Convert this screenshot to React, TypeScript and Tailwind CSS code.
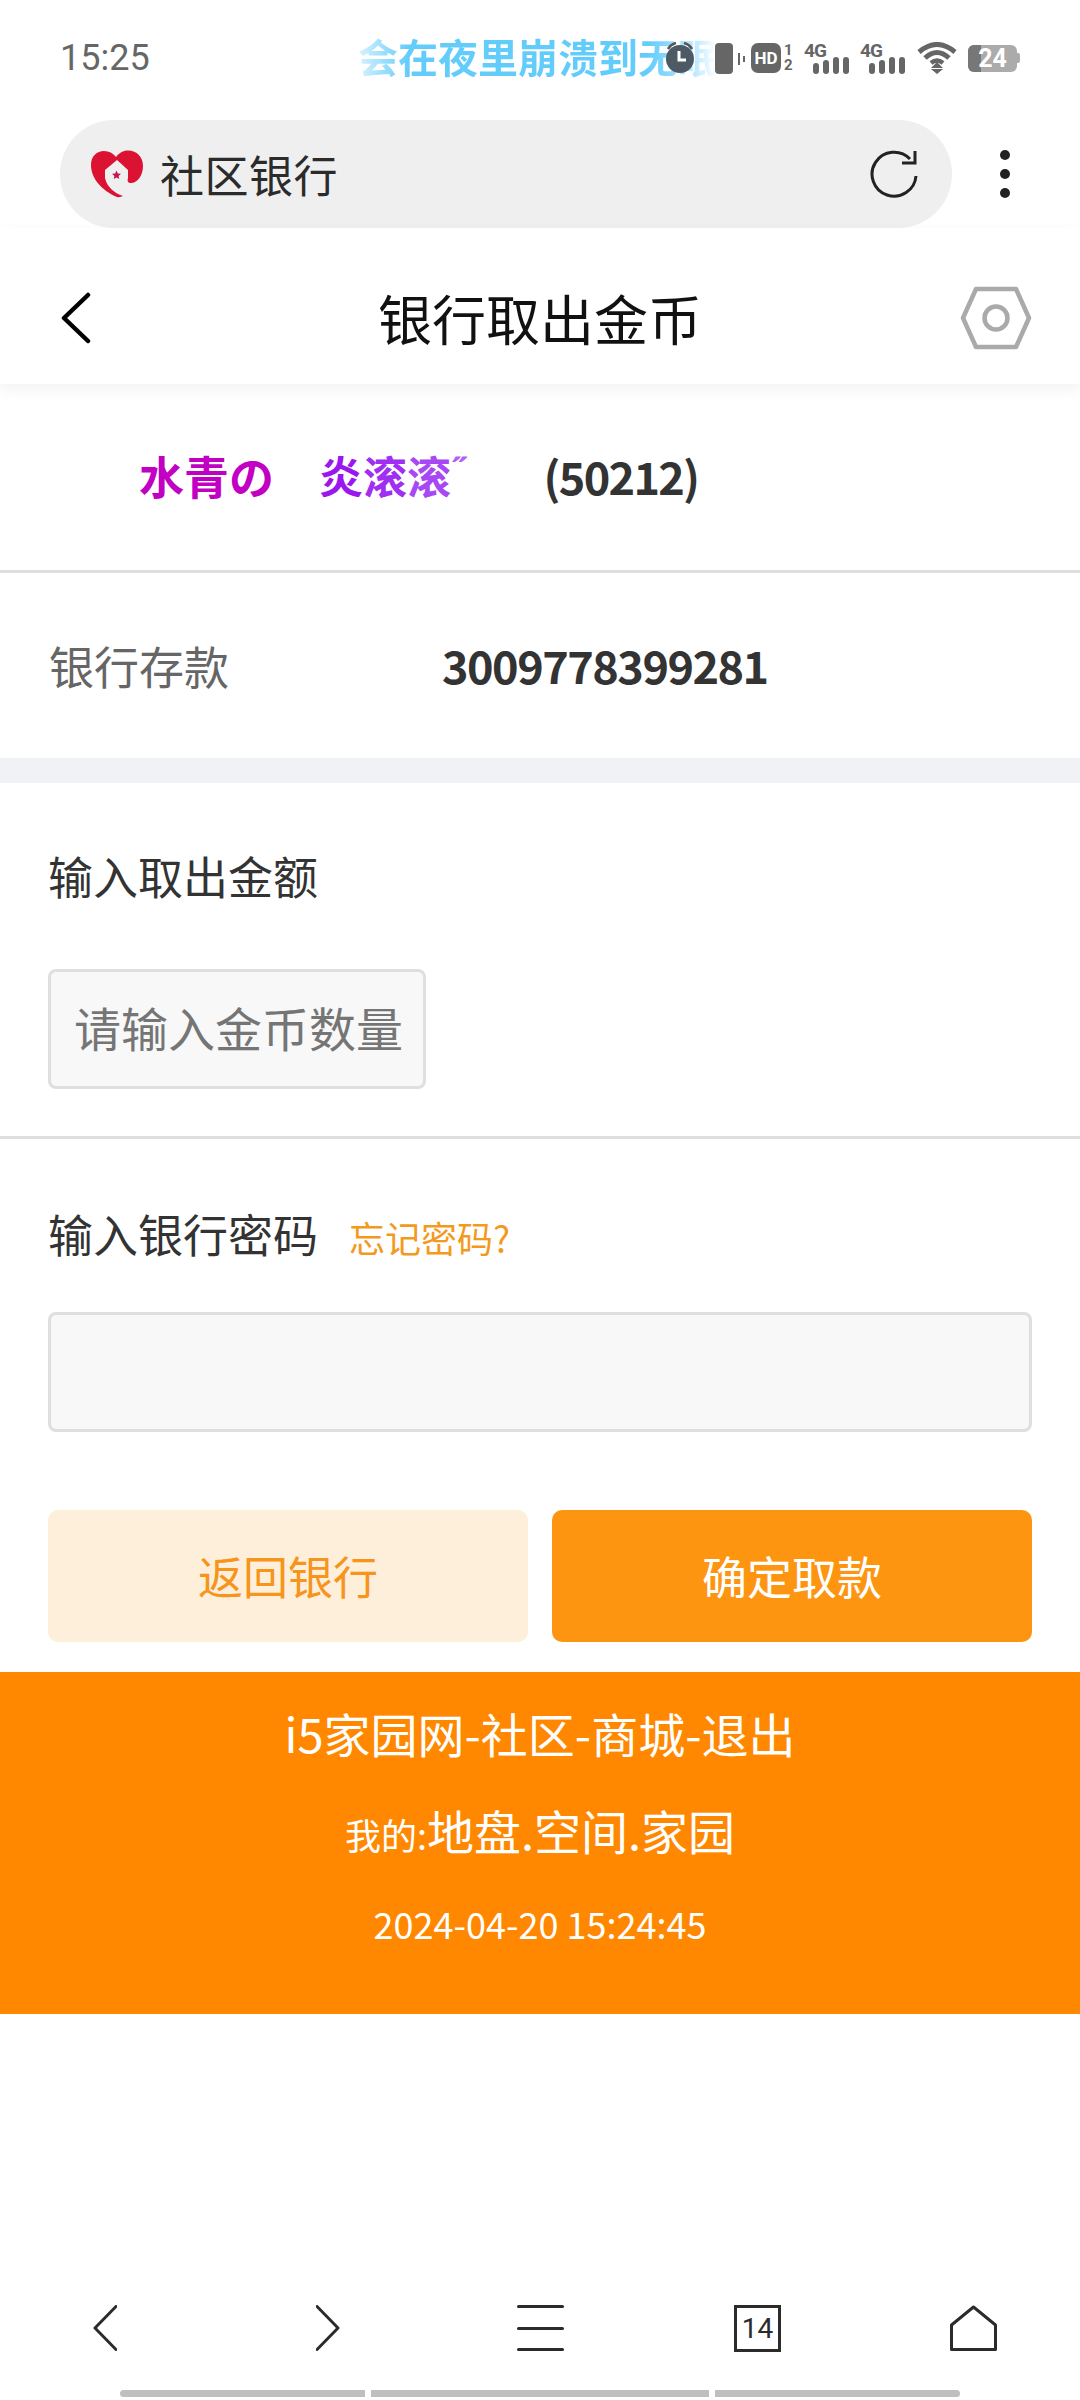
import React from 'react';

const cjk = "font-['Noto_Sans_CJK_SC','Noto_Sans',sans-serif]";

function SignalIcon() {
  return (
    <svg width="46" height="32" viewBox="0 0 46 32" className="text-[#666]">
      <text x="0" y="15" fontSize="19" fontWeight="700" fill="currentColor" fontFamily="Roboto, sans-serif" textLength="23">4G</text>
      <rect x="9" y="21" width="6" height="11" rx="3" fill="currentColor" />
      <rect x="19" y="18" width="6" height="14" rx="3" fill="currentColor" />
      <rect x="29" y="15" width="6" height="17" rx="3" fill="currentColor" />
      <rect x="39" y="15" width="6" height="17" rx="3" fill="currentColor" />
    </svg>
  );
}

function StatusIcons() {
  return (
    <div className="absolute right-[60px] top-[42px] flex items-center h-[32px]">
      {/* alarm */}
      <svg width="30" height="32" viewBox="0 0 30 32" className="mr-[20px]">
        <path d="M3 7 Q6 2 11 1 M27 7 Q24 2 19 1" fill="none" stroke="#555" strokeWidth="2.5" />
        <circle cx="15" cy="17" r="14" fill="#4d5a66" />
        <path d="M14 9v9h7" fill="none" stroke="#fff" strokeWidth="3" />
      </svg>
      {/* vibrate */}
      <svg width="30" height="32" viewBox="0 0 30 32" className="mr-[6px]">
        <rect x="0" y="1" width="18" height="31" rx="4" fill="#666" />
        <path d="M24 11v12M29 14v6" stroke="#666" strokeWidth="2" />
      </svg>
      {/* hd */}
      <div className="w-[30px] h-[30px] rounded-[7px] bg-[#666] flex items-center justify-center text-white text-[17px] font-bold font-['Roboto',sans-serif] leading-none">HD</div>
      <div className="flex flex-col w-[10px] ml-[3px] text-[#666] text-[15px] font-bold leading-[15px] font-['Roboto',sans-serif]">
        <span>1</span>
        <span>2</span>
      </div>
      <div className="ml-[10px]"><SignalIcon /></div>
      <div className="ml-[10px]"><SignalIcon /></div>
      {/* wifi */}
      <svg width="40" height="32" viewBox="0 0 40 32" className="ml-[11px]">
        <path d="M2 10 Q20 -5 38 10" fill="none" stroke="#666" strokeWidth="5" />
        <path d="M8 16 Q20 5 32 16" fill="none" stroke="#666" strokeWidth="5" />
        <path d="M14 21 Q20 16 26 21" fill="none" stroke="#666" strokeWidth="4.5" />
        <path d="M14 26h12l-6 -6zM14 27h12l-6 5z" fill="#666" />
      </svg>
      {/* battery */}
      <div className="relative ml-[11px] w-[49px] h-[27px] rounded-[6px] bg-[#ababab] overflow-hidden flex items-center justify-center">
        <div className="absolute left-0 top-0 bottom-0 w-[13px] bg-[#777]" />
        <span className="relative text-white text-[25px] font-bold leading-none font-['Roboto',sans-serif]">24</span>
      </div>
      <div className="w-[3px] h-[10px] bg-[#ababab] rounded-r-[2px]" />
    </div>
  );
}

function Logo() {
  return (
    <svg width="54" height="48" viewBox="0 0 54 48">
      <path
        d="M27 47 C11 40 1 28 1 15 C1 6 7 1 14 1 C19 1 23 3 26 7 C29 3 33 0.500 38 0.500 C47 0.500 53 7 53 16 C53 26 47 33 41 33 C38 33 37 31 38 28 L38 20 L27 10 L15 20 L15 28 C17 37 24 43 33 46 C31 47 29 47.500 27 47 Z"
        fill="#dc1232"
      />
      <path d="M26.500 20.500l1.300 3 3.200.3-2.400 2.100.7 3.100-2.800-1.600-2.800 1.600.7-3.100-2.400-2.100 3.200-.3z" fill="#c4154f" />
    </svg>
  );
}

function FieldLabel({ children }: { children: React.ReactNode }) {
  return <span className="text-[45px] leading-[64px] text-[#333]">{children}</span>;
}

export default function App() {
  return (
    <div className={`w-[1080px] h-[2400px] bg-white flex flex-col overflow-hidden ${cjk}`}>
      {/* status bar */}
      <div className="relative h-[120px] shrink-0">
        <span className="absolute left-[60px] top-[36px] text-[36px] leading-[44px] text-[#666] font-['Roboto',sans-serif]">15:25</span>
        <span className="absolute left-[358px] top-[27px] w-[362px] whitespace-nowrap text-[40px] leading-[58px] font-bold text-transparent bg-clip-text bg-[linear-gradient(90deg,#d8f2fe_0px,#62cdfb_50px,#62cdfb_290px,#c5ecfe_340px,#ffffff_358px)]">
          会在夜里崩溃到无眠
        </span>
        <StatusIcons />
      </div>

      {/* address bar */}
      <div className="h-[108px] shrink-0 flex items-center pl-[60px]">
        <div className="w-[892px] h-[108px] rounded-[54px] bg-[#efefef] flex items-center pl-[30px] pr-[34px]">
          <Logo />
          <span className="ml-[16px] text-[44px] text-[#2b2b2b] leading-none tracking-[0.5px]">社区银行</span>
          <svg width="48" height="50" viewBox="0 0 48 50" className="ml-auto" fill="none" stroke="#222" strokeWidth="3">
            <path d="M40 10 A22 22 0 1 0 46 27" />
            <path d="M32 14 L45 14 L45 2" strokeLinejoin="miter" />
          </svg>
        </div>
        <div className="ml-[48px] flex flex-col gap-[9px]">
          <div className="w-[10px] h-[10px] rounded-full bg-[#222]" />
          <div className="w-[10px] h-[10px] rounded-full bg-[#222]" />
          <div className="w-[10px] h-[10px] rounded-full bg-[#222]" />
        </div>
      </div>

      {/* title bar */}
      <div className="relative h-[156px] shrink-0 flex items-center justify-between pt-[24px] pl-[60px] pr-[48px] bg-white shadow-[0_6px_14px_rgba(0,0,0,0.05)]">
        <svg width="32" height="52" viewBox="0 0 32 52" fill="none" stroke="#000" strokeWidth="4.5" strokeLinecap="round" strokeLinejoin="round">
          <path d="M28 3 L4 26 L28 49" />
        </svg>
        <span className="absolute left-0 right-0 text-center text-[54px] leading-none text-[#111]">银行取出金币</span>
        <svg width="72" height="64" viewBox="0 0 72 64" fill="none" stroke="#aaaaaa">
          <path d="M16 3 H56 L69 32 L56 61 H16 L3 32 Z" strokeWidth="4.5" strokeLinejoin="round" />
          <circle cx="36" cy="32" r="11.5" strokeWidth="4.5" />
        </svg>
      </div>

      {/* user */}
      <div className="h-[189px] shrink-0 flex items-center border-b-[3px] border-[#dedede] pb-[4px] pl-[139px] text-[45px] font-bold leading-none">
        <span className="text-[#c200c4]">水青の</span>
        <span className="ml-[45px] text-[#9a17ee] text-[44px]">炎</span>
        <span className="text-[#a02ff2] text-[44px]">滚</span>
        <span className="text-[#a848f4] text-[44px]">滚</span>
        <span className="text-[#b060f6] text-[34px] self-start mt-[68px]">˝</span>
        <span className="ml-[75px] text-[#333] text-[45px] tracking-[-1.7px]">(50212)</span>
      </div>

      {/* balance */}
      <div className="h-[185px] shrink-0 flex items-center pl-[49px]">
        <span className="w-[393px] text-[45px] text-[#666]">银行存款</span>
        <span className="-mt-[2px] text-[45px] font-bold text-[#333] tracking-[-1.5px]">3009778399281</span>
      </div>
      <div className="h-[25px] shrink-0 bg-[#f1f2f6]" />

      {/* amount */}
      <div className="h-[356px] shrink-0 border-b-[3px] border-[#dedede] px-[48px] pt-[61px]">
        <FieldLabel>输入取出金额</FieldLabel>
        <div className="mt-[61px] w-[378px] h-[120px] rounded-[8px] border-[3px] border-[#dfdfdf] bg-[#f8f8f8] flex items-center pl-[23px] pb-[6px] overflow-hidden">
          <span className="text-[47px] leading-none text-[#757575] whitespace-nowrap">请输入金币数量</span>
        </div>
      </div>

      {/* password */}
      <div className="h-[503px] shrink-0 px-[48px] pt-[63px]">
        <div className="flex items-center h-[64px]">
          <FieldLabel>输入银行密码</FieldLabel>
          <span className="ml-[31px] mt-[6px] text-[36px] text-[#f39a1e] leading-none">忘记密码?</span>
        </div>
        <div className="mt-[46px] h-[120px] rounded-[8px] border-[3px] border-[#dfdfdf] bg-[#f8f8f8]" />
        <div className="mt-[78px] grid grid-cols-2 gap-[24px]">
          <div className="h-[132px] rounded-[10px] bg-[#feefdb] flex items-center justify-center text-[45px] text-[#f6941c]">返回银行</div>
          <div className="h-[132px] rounded-[10px] bg-[#fd9510] flex items-center justify-center text-[45px] text-white">确定取款</div>
        </div>
      </div>

      {/* footer */}
      <div className="mt-[30px] h-[342px] shrink-0 bg-[#ff8800] text-white flex flex-col items-center">
        <div className="mt-[28px] h-[64px] flex items-center text-[47px] leading-none">i5家园网-社区-商城-退出</div>
        <div className="mt-[31px] h-[64px] flex items-baseline">
          <span className="text-[36px]">我的:</span>
          <span className="text-[47px]">地盘.空间.家园</span>
        </div>
        <div className="mt-[39px] text-[36px] leading-[50px]">2024-04-20 15:24:45</div>
      </div>

      {/* bottom nav */}
      <div className="mt-auto h-[95px] shrink-0 flex items-start pt-[10px] pl-[93px]">
        <svg width="24" height="46" viewBox="0 0 24 46" fill="none" stroke="#2b2b2b" strokeWidth="3" strokeLinecap="round" strokeLinejoin="round">
          <path d="M23 1.500 L2 23 L23 44.500" />
        </svg>
        <svg width="24" height="46" viewBox="0 0 24 46" className="ml-[199px]" fill="none" stroke="#2b2b2b" strokeWidth="3" strokeLinecap="round" strokeLinejoin="round">
          <path d="M1 1.500 L22 23 L1 44.500" />
        </svg>
        <div className="ml-[177px] w-[47px] h-[46px] flex flex-col justify-between">
          <div className="h-[3px] rounded-full bg-[#2b2b2b]" />
          <div className="h-[3px] rounded-full bg-[#2b2b2b]" />
          <div className="h-[3px] rounded-full bg-[#2b2b2b]" />
        </div>
        <div className="ml-[170px] w-[47px] h-[47px] border-[3px] border-[#2b2b2b] flex items-center justify-center text-[28px] leading-none text-[#2b2b2b] font-['Roboto',sans-serif]">14</div>
        <svg width="47" height="46" viewBox="0 0 47 46" className="ml-[169px]" fill="none" stroke="#2b2b2b" strokeWidth="3" strokeLinejoin="round">
          <path d="M23.500 2 L45.500 20 V44.500 H1.500 V20 Z" />
        </svg>
      </div>

      {/* scroll indicator */}
      <div className="h-[10px] shrink-0 flex pl-[120px] gap-[6px]">
        <div className="w-[245px] h-[7px] rounded-l-full bg-[#bfbfbf]" />
        <div className="w-[338px] h-[7px] bg-[#bfbfbf]" />
        <div className="w-[245px] h-[7px] rounded-r-full bg-[#bfbfbf]" />
      </div>
    </div>
  );
}
